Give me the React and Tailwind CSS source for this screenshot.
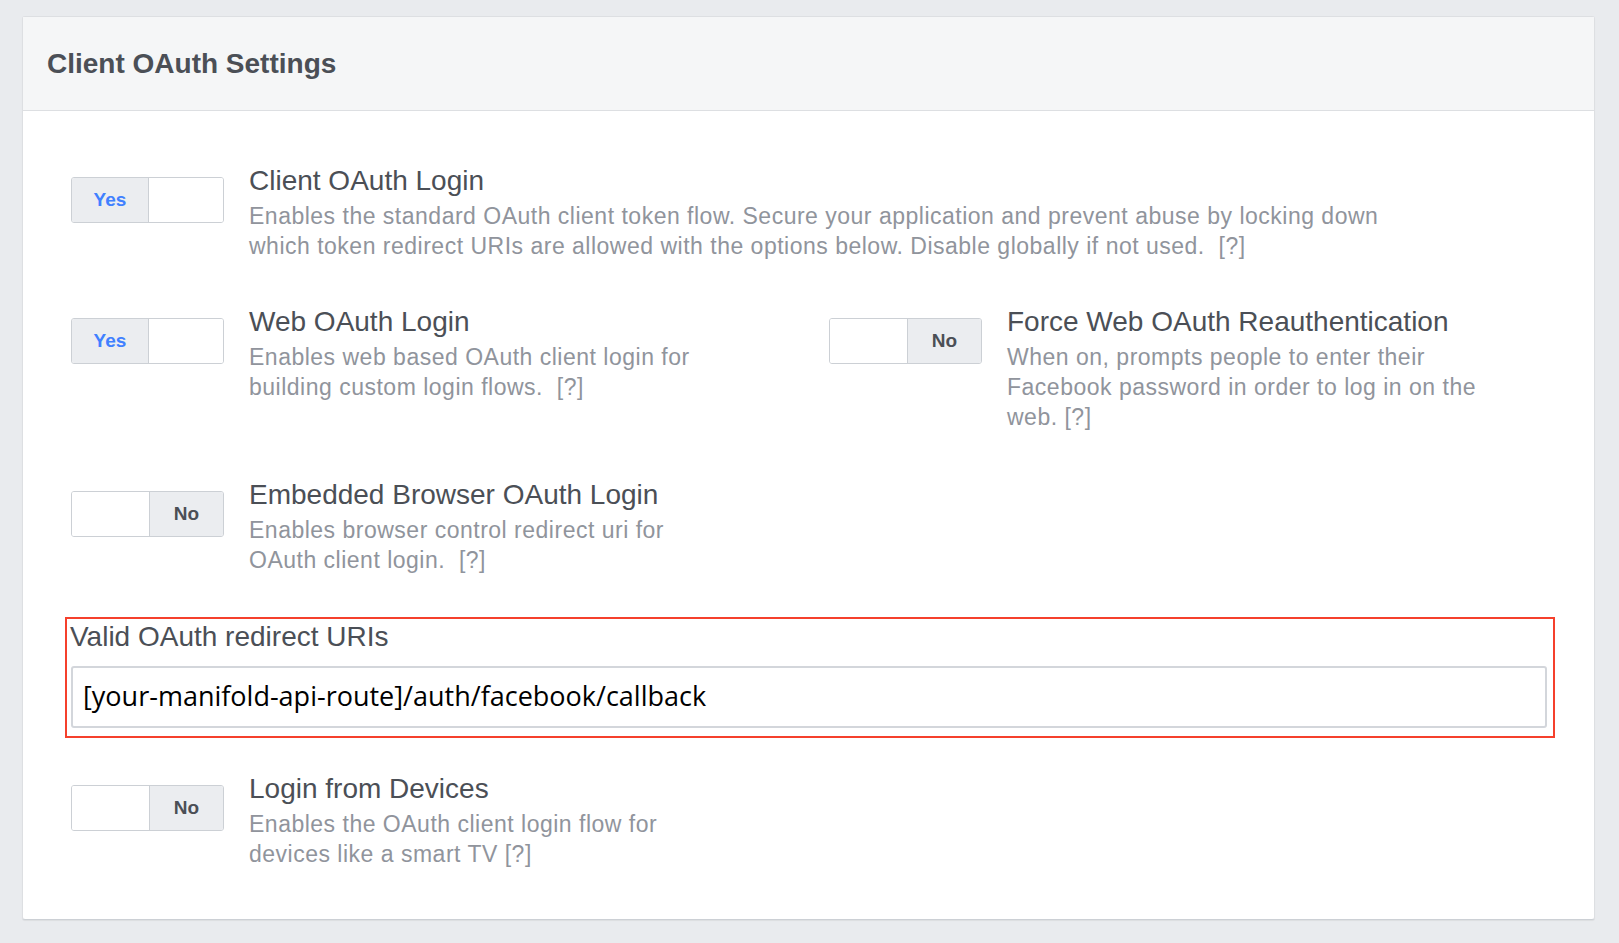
import { useState } from "react";

function Toggle({ on, onChange }) {
  return (
    <button
      onClick={onChange}
      className="mt-[13px] flex h-[46px] w-[153px] shrink-0 overflow-hidden rounded-[3px] border border-[#ccd0d5] text-[19px] font-bold"
    >
      {on ? (
        <>
          <span className="flex w-[77px] items-center justify-center border-r border-[#ccd0d5] bg-[#ebedf0] text-[#4080ff]">Yes</span>
          <span className="flex-1 bg-white" />
        </>
      ) : (
        <>
          <span className="w-[78px] border-r border-[#ccd0d5] bg-white" />
          <span className="flex flex-1 items-center justify-center bg-[#ebedf0] text-[#4b4f56]">No</span>
        </>
      )}
    </button>
  );
}

function Setting({ title, desc, on, onChange, width }) {
  return (
    <div className="flex gap-[25px]">
      <Toggle on={on} onChange={onChange} />
      <div className={width}>
        <div className="text-[28px] leading-[34px] text-[#4b4f56]">{title}</div>
        <p className="mt-[3px] text-[23px] leading-[30px] tracking-[0.5px] text-[#90949c]">{desc}</p>
      </div>
    </div>
  );
}

export default function App() {
  const [state, setState] = useState({
    client: true,
    web: true,
    force: false,
    embedded: false,
    devices: false,
  });
  const [uri, setUri] = useState("[your-manifold-api-route]/auth/facebook/callback");
  const flip = (k) => setState((s) => ({ ...s, [k]: !s[k] }));

  return (
    <div className="min-h-screen bg-[#e9ebee] pt-4 pr-6 pb-[25px] pl-[22px] font-['Liberation_Sans',Arial,sans-serif]">
      <div className="rounded-[3px] border border-[#dddfe2] border-b-[#ccd0d5] bg-white shadow-[0_1px_1px_rgba(0,0,0,0.06)]">
        <div className="flex h-[94px] items-center border-b border-[#dddfe2] bg-[#f5f6f7] px-6">
          <h2 className="text-[28px] font-bold text-[#4b4f56]">Client OAuth Settings</h2>
        </div>

        <div className="flex flex-col px-12 pt-[53px] pb-[50px]">
          <Setting
            title="Client OAuth Login"
            desc={"Enables the standard OAuth client token flow. Secure your application and prevent abuse by locking down which token redirect URIs are allowed with the options below. Disable globally if not used.\u00a0 [?]"}
            on={state.client}
            onChange={() => flip("client")}
            width="w-[1175px]"
          />

          <div className="mt-[44px] flex">
            <div className="w-[758px]">
              <Setting
                title="Web OAuth Login"
                desc={"Enables web based OAuth client login for building custom login flows.\u00a0 [?]"}
                on={state.web}
                onChange={() => flip("web")}
                width="w-[475px]"
              />
            </div>
            <Setting
              title="Force Web OAuth Reauthentication"
              desc="When on, prompts people to enter their Facebook password in order to log in on the web. [?]"
              on={state.force}
              onChange={() => flip("force")}
              width="w-[500px]"
            />
          </div>

          <div className="mt-[46px]">
            <Setting
              title="Embedded Browser OAuth Login"
              desc={"Enables browser control redirect uri for OAuth client login.\u00a0 [?]"}
              on={state.embedded}
              onChange={() => flip("embedded")}
              width="w-[475px]"
            />
          </div>

          {/* highlighted field */}
          <div className="mt-[42px] -ml-[6px] -mr-[9px] border-2 border-[#f5402c] pt-[2px] pr-[6px] pb-[8px] pl-[4px]">
            <label className="-ml-px block text-[28px] leading-[32px] text-[#4b4f56]">Valid OAuth redirect URIs</label>
            <input
              value={uri}
              onChange={(e) => setUri(e.target.value)}
              className="mt-[13px] h-[62px] w-full rounded-[3px] border-2 border-[#d3d6db] bg-white px-[10px] pb-[3px] font-['Open_Sans',sans-serif] text-[27px] text-black outline-none"
            />
          </div>

          <div className="mt-[34px]">
            <Setting
              title="Login from Devices"
              desc="Enables the OAuth client login flow for devices like a smart TV [?]"
              on={state.devices}
              onChange={() => flip("devices")}
              width="w-[475px]"
            />
          </div>
        </div>
      </div>
    </div>
  );
}
